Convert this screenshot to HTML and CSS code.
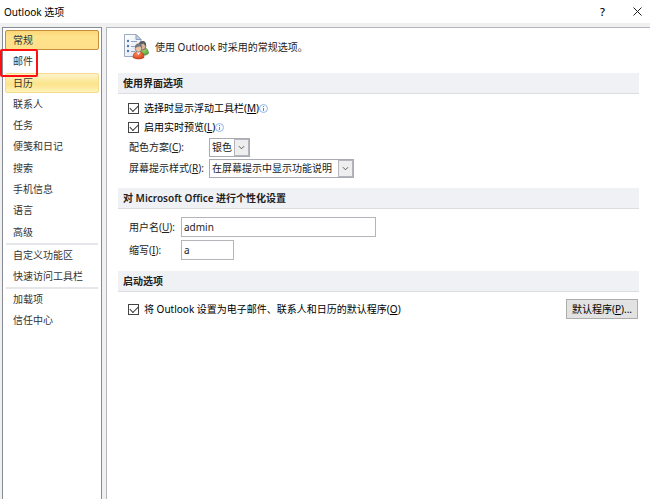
FILE: index.html
```html
<!DOCTYPE html>
<html lang="zh-CN">
<head>
<meta charset="utf-8">
<title>Outlook 选项</title>
<link rel="stylesheet" href="styles.css">
</head>
<body>
<div class="dialog">
  <header class="titlebar">
    <h1>Outlook 选项</h1>
    <div class="window-buttons">
      <button type="button" aria-label="帮助">?</button>
      <button type="button" aria-label="关闭"><svg width="9" height="9" viewBox="0 0 9 9"><path d="M.5.5l8 8M8.500.5l-8 8" stroke="#222" fill="none"/></svg></button>
    </div>
  </header>
  <div class="body">
    <nav class="sidebar">
      <ul class="group main-group">
        <li><a href="#" class="current">常规</a></li>
        <li><a href="#">邮件</a><span class="marker"></span></li>
        <li><a href="#" class="hover">日历</a></li>
        <li><a href="#">联系人</a></li>
        <li><a href="#">任务</a></li>
        <li><a href="#">便笺和日记</a></li>
        <li><a href="#">搜索</a></li>
        <li><a href="#">手机信息</a></li>
        <li><a href="#">语言</a></li>
        <li><a href="#">高级</a></li>
      </ul>
      <ul class="group">
        <li><a href="#">自定义功能区</a></li>
        <li><a href="#">快速访问工具栏</a></li>
      </ul>
      <ul class="group">
        <li><a href="#">加载项</a></li>
        <li><a href="#">信任中心</a></li>
      </ul>
    </nav>
    <main class="content">
      <div class="intro">
        <svg width="26" height="26" viewBox="0 0 26 26">
          <defs>
            <linearGradient id="page" x1="0" y1="0" x2="1" y2="1"><stop offset="0" stop-color="#fff"/><stop offset="1" stop-color="#dce5f0"/></linearGradient>
            <radialGradient id="red" cx=".4" cy=".3" r=".8"><stop offset="0" stop-color="#ff8a5c"/><stop offset="1" stop-color="#cf3a16"/></radialGradient>
            <radialGradient id="green" cx=".5" cy=".3" r=".8"><stop offset="0" stop-color="#9bd36b"/><stop offset="1" stop-color="#4b9433"/></radialGradient>
          </defs>
          <path d="M.5.5H12l5 5v17H.5z" fill="url(#page)" stroke="#9dabc0"/>
          <path d="M12 .5v5h5z" fill="#c3d5ec" stroke="#8e9fb8"/>
          <g fill="#4f76ad"><circle cx="4" cy="7" r="1.200"/><circle cx="4" cy="12" r="1.200"/><circle cx="4" cy="17" r="1.200"/></g>
          <path d="M7 7.500h6M7 12.500h5M7 17.500h4" stroke="#8fa3bf"/>
          <path d="M15 20c0-4 2-6 5-6s4.500 2 4.500 5.500c-2 2-6 2.500-9.500.5z" fill="url(#green)" stroke="#4c8440" stroke-width=".6"/>
          <ellipse cx="18.500" cy="12" rx="3.400" ry="4" fill="#d9b39a" stroke="#555" stroke-width=".7"/>
          <path d="M14.600 11.500c-.2-3 1.500-4.500 4-4.500 2.600 0 4 2 3.400 5-1-.5-2-1.500-2.500-2.500-1.500 1-3 1-4.900 2z" fill="#5b5d61"/>
          <path d="M9 23.500c0-4 2-6 5.500-6s5.500 2 5.500 6c-3 2-8 2-11 0z" fill="url(#red)" stroke="#b03a1c" stroke-width=".6"/>
          <path d="M12.500 18l2 3 2-3z" fill="#fff"/>
          <ellipse cx="14.500" cy="14.500" rx="3.200" ry="3.800" fill="#e9c3a6" stroke="#666" stroke-width=".7"/>
          <path d="M10.900 14c-.2-3 1.300-4.500 3.600-4.500s3.900 1.500 3.500 4.500c-1-.5-1.700-1-2-1.800-1.500.9-3.100.8-5.100 1.800z" fill="#77787a"/>
        </svg>
        <p>使用 Outlook 时采用的常规选项。</p>
      </div>

      <section>
        <h2>使用界面选项</h2>
        <div class="rows">
          <div class="check-row">
            <input type="checkbox" id="toolbar" checked>
            <label for="toolbar">选择时显示浮动工具栏(<u>M</u>)</label>
            <svg class="info" width="9" height="9" viewBox="0 0 9 9"><circle cx="4.500" cy="4.500" r="4" fill="#f7faff" stroke="#8db0db" stroke-width=".9"/><path d="M4.500 2v1M4.500 4v3" stroke="#5b8ccd"/></svg>
          </div>
          <div class="check-row">
            <input type="checkbox" id="preview" checked>
            <label for="preview">启用实时预览(<u>L</u>)</label>
            <svg class="info" width="9" height="9" viewBox="0 0 9 9"><circle cx="4.500" cy="4.500" r="4" fill="#f7faff" stroke="#8db0db" stroke-width=".9"/><path d="M4.500 2v1M4.500 4v3" stroke="#5b8ccd"/></svg>
          </div>
          <div class="select-row">
            <label for="scheme">配色方案(<u>C</u>):</label>
            <span class="select scheme"><select id="scheme"><option>银色</option></select><svg class="arrow" viewBox="0 0 15 17"><path d="M4.500 7l3 3 3-3" fill="none" stroke="#444"/></svg></span>
          </div>
          <div class="select-row">
            <label for="tips">屏幕提示样式(<u>R</u>):</label>
            <span class="select tips"><select id="tips"><option>在屏幕提示中显示功能说明</option></select><svg class="arrow" viewBox="0 0 15 17"><path d="M4.500 7l3 3 3-3" fill="none" stroke="#444"/></svg></span>
          </div>
        </div>
      </section>

      <section>
        <h2>对 Microsoft Office 进行个性化设置</h2>
        <div class="rows fields">
          <div class="text-row">
            <label for="user">用户名(<u>U</u>):</label>
            <input type="text" id="user" class="user" value="admin">
          </div>
          <div class="text-row">
            <label for="initials">缩写(<u>I</u>):</label>
            <input type="text" id="initials" class="initials" value="a">
          </div>
        </div>
      </section>

      <section>
        <h2>启动选项</h2>
        <div class="rows startup">
          <div class="check-row">
            <input type="checkbox" id="default" checked>
            <label for="default">将 Outlook 设置为电子邮件、联系人和日历的默认程序(<u>O</u>)</label>
          </div>
          <button type="button" class="push">默认程序(<u>P</u>)...</button>
        </div>
      </section>
    </main>
  </div>
</div>
</body>
</html>
```
FILE: styles.css
```css
* {
  box-sizing: border-box;
}

body {
  margin: 0;
  font: 10px/14px "Noto Sans", "Noto Sans CJK SC", sans-serif;
  color: #222;
  background: #fff;
}

h1, h2, p, ul {
  margin: 0;
  padding: 0;
  font: inherit;
}

button, input, select {
  margin: 0;
  font: inherit;
  color: inherit;
}

u {
  text-underline-offset: 1px;
}

.dialog {
  display: flex;
  flex-direction: column;
  height: 100vh;
  overflow: hidden;
}

.titlebar {
  display: flex;
  justify-content: space-between;
  align-items: center;
  height: 23px;
  padding: 0 4px;
  color: #000;
}

.window-buttons {
  display: flex;
}

.window-buttons button {
  display: grid;
  place-items: center;
  width: 35px;
  height: 20px;
  padding: 0;
  border: 0;
  background: none;
  font-size: 11px;
  font-weight: 500;
}

.window-buttons button:last-child {
  margin-right: -9px;
}

.body {
  flex: 1;
  display: flex;
  gap: 4px;
  padding: 4px 0 0 2px;
  background: #f0f0f0;
}

.sidebar {
  width: 100px;
  padding: 2px 2px 0;
  border: 1px solid #868a94;
  border-bottom: 0;
  background: #fff;
}

.group {
  list-style: none;
}

.group + .group::before {
  content: "";
  display: block;
  height: 2px;
  margin: 0 1px;
  background: #e6e7eb;
}

.main-group {
  display: grid;
  grid-auto-rows: 1fr;
  height: 213px;
}

.group li {
  position: relative;
  min-height: 21px;
}

.group a {
  display: flex;
  align-items: center;
  height: 20px;
  padding-left: 7px;
  border: 1px solid transparent;
  border-radius: 2px;
  color: #333;
  text-decoration: none;
}

.group .current {
  border-color: #c4903f;
  background: linear-gradient(#fbd777, #ffe28c 30%, #ffe08a);
}

.group .hover {
  border-color: #f4dc8c;
  background: linear-gradient(#fdf3cc, #fbe795 45%, #fbe38a 55%, #fff3b8);
}

.marker {
  position: absolute;
  z-index: 1;
  top: -2px;
  left: -5px;
  width: 38px;
  height: 28px;
  border: 2px solid #fe1010;
  border-radius: 2px;
  pointer-events: none;
}

.content {
  flex: 1;
  padding: 0 11px;
  border-top: 1px solid #b4b6bf;
  border-left: 1px solid #b4b6bf;
  background: #fff;
}

.intro {
  display: flex;
  align-items: center;
  gap: 5px;
  height: 45px;
  padding: 0 6px 7px;
}

h2 {
  height: 21px;
  padding-left: 5px;
  border-bottom: 1px solid #dcdde1;
  background: #f0f1f5;
  line-height: 20px;
  font-weight: 600;
}

.rows {
  display: flex;
  flex-direction: column;
  gap: 5px;
  padding: 7px 0 12px 10px;
}

.fields {
  padding-top: 9px;
}

.check-row, .select-row, .text-row {
  display: flex;
  align-items: center;
}

.check-row {
  gap: 5px;
  min-height: 14px;
}

.check-row label {
  color: #000;
}

.info {
  margin-left: -5px;
}

input[type="checkbox"] {
  appearance: none;
  width: 11px;
  height: 11px;
  border: 1px solid #444;
  background: #fff;
}

input[type="checkbox"]:checked::before {
  content: "";
  display: block;
  width: 7px;
  height: 4px;
  margin: 1px;
  border: solid #333;
  border-width: 0 0 1px 1px;
  transform: rotate(-45deg);
}

.select-row {
  height: 16px;
}

.select-row label {
  width: 81px;
  padding-left: 1px;
}

.select {
  display: grid;
  grid-template-columns: 1fr 15px;
  height: 19px;
  border: 1px solid #a8abb3;
}

.scheme {
  width: 41px;
}

.tips {
  width: 145px;
}

.select select {
  grid-area: 1 / 1 / 2 / 3;
  appearance: none;
  width: 100%;
  padding: 0 0 0 2px;
  border: 0;
  background: #fff;
}

.arrow {
  grid-area: 1 / 2;
  z-index: 1;
  width: 15px;
  height: 17px;
  border: 1px solid #b4b6bc;
  background: #eee;
  pointer-events: none;
}

.text-row {
  height: 18px;
}

.text-row label {
  width: 53px;
  padding-left: 1px;
}

input[type="text"] {
  height: 20px;
  padding: 0 2px;
  border: 1px solid #b4b5bb;
  background: #fff;
}

.user {
  width: 195px;
}

.initials {
  width: 53px;
}

.startup {
  flex-direction: row;
  justify-content: space-between;
  align-items: center;
  padding-right: 1px;
}

.push {
  height: 20px;
  padding: 0 5px;
  border: 1px solid #adadad;
  background: #e2e2e2;
  color: #000;
  line-height: 16px;
}
```
